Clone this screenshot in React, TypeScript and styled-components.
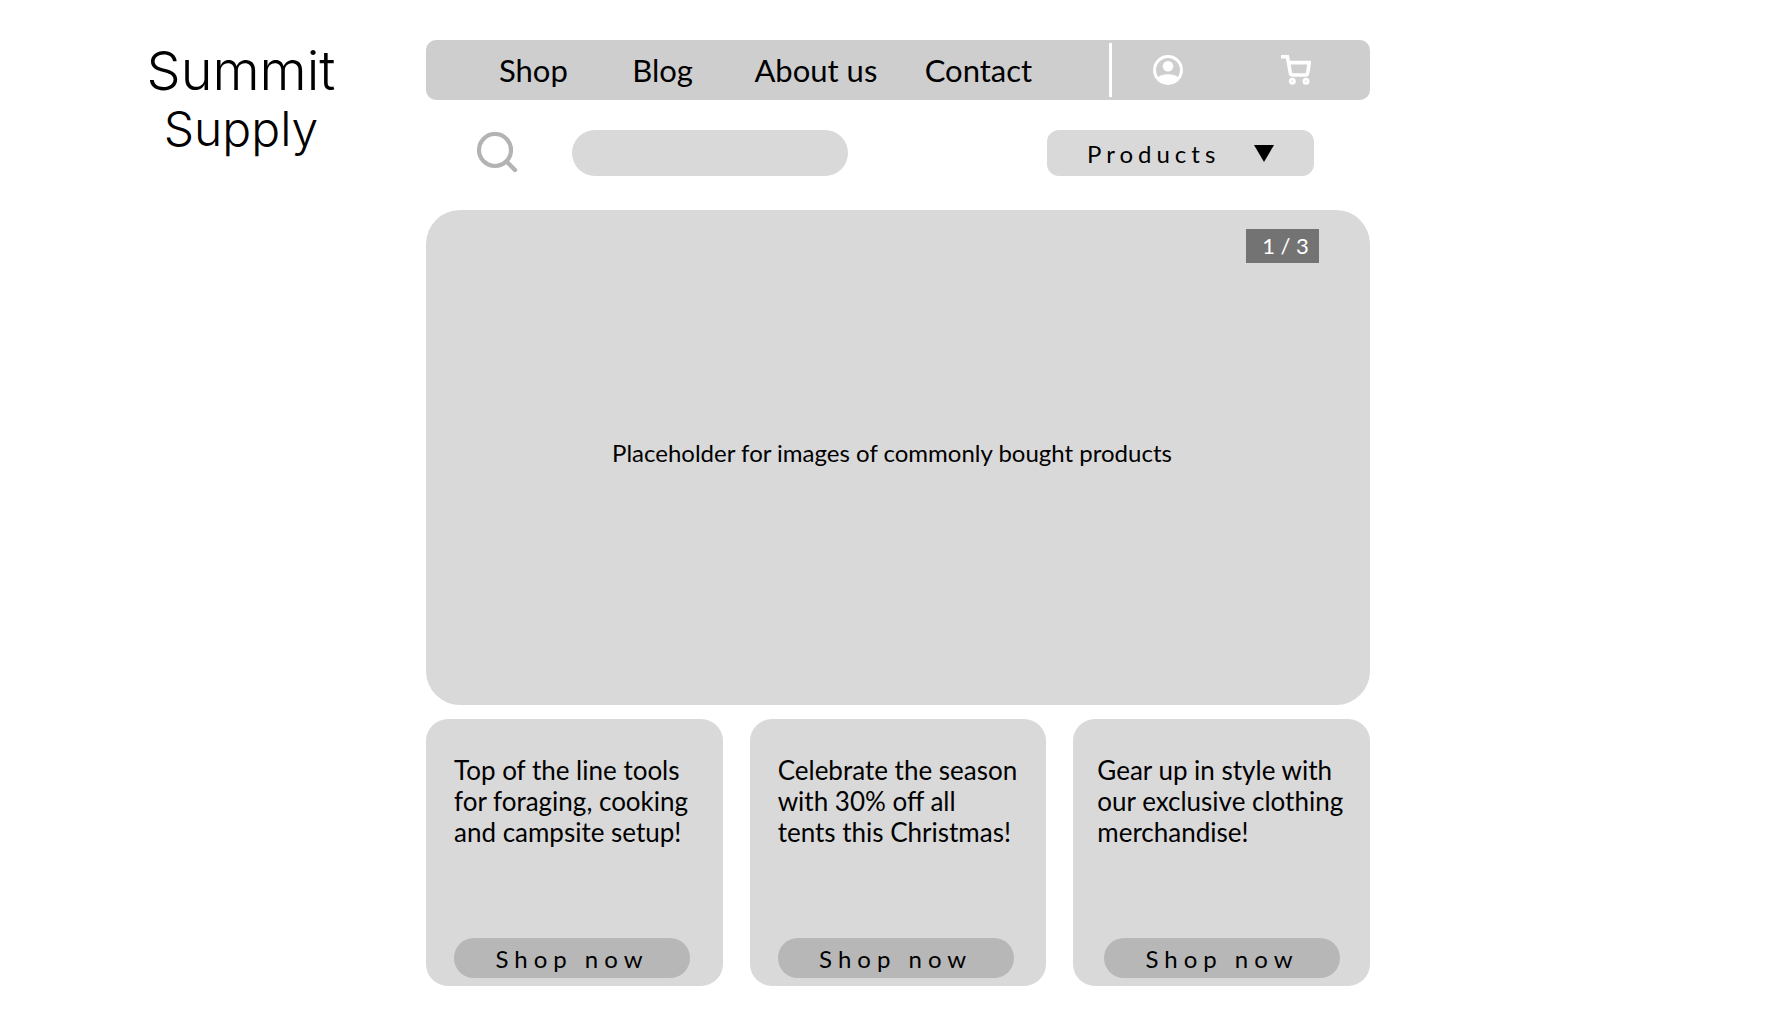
import React from 'react';
import styled, { createGlobalStyle } from 'styled-components';

const GlobalStyle = createGlobalStyle`
  *, *::before, *::after { box-sizing: border-box; }
  body {
    margin: 0;
    background: #ffffff;
    color: #000000;
    font-family: Lato, "Liberation Sans", sans-serif;
  }
`;

const Page = styled.div`
  display: grid;
  grid-template-columns: minmax(0, 426fr) minmax(0, 944fr) minmax(0, 422fr);
  align-items: start;
  padding: 40px 0 38px;
`;

const Brand = styled.a`
  display: flex;
  flex-direction: column;
  align-items: center;
  padding: 2px 0 0 56px;
  color: inherit;
  text-decoration: none;
  font-family: Inter, "Liberation Sans", sans-serif;
  font-weight: 300;
`;

const BrandLine = styled.span<{ $size: number }>`
  font-size: ${({ $size }) => $size}px;
  line-height: 58px;
`;

const Main = styled.main`
  display: flex;
  flex-direction: column;
`;

const NavBar = styled.nav`
  display: grid;
  grid-template-columns: 683fr 261fr;
  align-items: center;
  height: 60px;
  border-radius: 10px;
  background: #cecece;
`;

const NavLinks = styled.ul`
  display: grid;
  grid-template-columns: 133fr 122fr 170fr 184fr;
  margin: 0;
  padding: 0 0 0 73px;
  list-style: none;
`;

const NavLink = styled.a`
  color: inherit;
  font-size: 31px;
  line-height: 60px;
  text-decoration: none;
  white-space: nowrap;
`;

const NavActions = styled.div`
  display: flex;
  align-items: center;
  justify-content: space-between;
  height: 54px;
  padding: 0 59px 0 41px;
  border-left: 3px solid #ffffff;
`;

const IconButton = styled.button`
  display: flex;
  padding: 0;
  border: 0;
  background: none;
  color: #ffffff;
  cursor: pointer;
`;

const Tools = styled.div`
  display: flex;
  align-items: center;
  padding: 30px 56px 34px 50px;
`;

const SearchLabel = styled.label`
  display: flex;
  align-items: center;
  gap: 54px;
  color: #b3b3b3;
`;

const SearchInput = styled.input`
  width: 276px;
  height: 46px;
  padding: 0 22px;
  border: 0;
  border-radius: 23px;
  background: #d9d9d9;
  font: 24px Lato, "Liberation Sans", sans-serif;
`;

const SelectWrap = styled.div`
  display: grid;
  align-items: center;
  margin-left: auto;

  > * { grid-area: 1 / 1; }
  > svg { justify-self: end; margin-right: 40px; pointer-events: none; }
`;

const Select = styled.select`
  appearance: none;
  width: 267px;
  height: 46px;
  padding: 0 64px 0 40px;
  border: 0;
  border-radius: 12px;
  background: #d9d9d9;
  color: #000000;
  font: 24px Lato, "Liberation Sans", sans-serif;
  letter-spacing: 5px;
`;

const Hero = styled.section`
  display: grid;
  grid-template-rows: 34px 1fr 44px;
  min-height: 495px;
  padding: 19px 51px;
  border-radius: 34px;
  background: #d9d9d9;
`;

const Counter = styled.span`
  justify-self: end;
  width: 73px;
  padding-left: 6px;
  background: #737373;
  color: #ffffff;
  font-size: 22px;
  line-height: 34px;
  text-align: center;
`;

const HeroText = styled.p`
  align-self: center;
  margin: 0;
  padding-right: 12px;
  font-size: 24px;
  line-height: 30px;
  text-align: center;
`;

const Cards = styled.section`
  display: grid;
  grid-template-columns: repeat(3, minmax(0, 1fr));
  gap: 27px;
  padding-top: 14px;
`;

const Card = styled.article<{ $shifted?: boolean }>`
  display: flex;
  flex-direction: column;
  justify-content: space-between;
  min-height: 267px;
  padding: ${({ $shifted }) => ($shifted ? '36px 30px 8px 24px' : '36px 24px 8px 28px')};
  border-radius: 22px;
  background: #d9d9d9;
`;

const CardText = styled.p`
  margin: 0;
  font-size: 26px;
  line-height: 31px;
  white-space: pre;
`;

const ShopButton = styled.button<{ $shifted?: boolean }>`
  align-self: ${({ $shifted }) => ($shifted ? 'flex-end' : 'flex-start')};
  width: 236px;
  height: 40px;
  padding: 0;
  border: 0;
  border-radius: 20px;
  background: #b7b7b7;
  color: #000000;
  font: 24px Lato, "Liberation Sans", sans-serif;
  letter-spacing: 6px;
  cursor: pointer;
`;

const links = ['Shop', 'Blog', 'About us', 'Contact'];

const cards: { text: string; shifted?: boolean }[] = [
  { text: 'Top of the line tools\nfor foraging, cooking\nand campsite setup!' },
  { text: 'Celebrate the season\nwith 30% off all\ntents this Christmas!' },
  { text: 'Gear up in style with\nour exclusive clothing\nmerchandise!', shifted: true },
];

const UserIcon = () => (
  <svg width="30" height="30" viewBox="0 0 30 30" aria-hidden="true">
    <circle cx="15" cy="15" r="13.5" fill="none" stroke="currentColor" strokeWidth="3" />
    <circle cx="15" cy="11.3" r="5.3" fill="currentColor" />
    <path d="M4.5 22.5C7 20.5 11 19.3 15 19.3s8 1.2 10.5 3.2A13.5 13.5 0 0 1 4.5 22.5Z" fill="currentColor" />
  </svg>
);

const CartIcon = () => (
  <svg width="30" height="30" viewBox="0 0 30 30" fill="none" stroke="currentColor" aria-hidden="true">
    <path d="M0 1.7H6.4L9.4 18.2Q9.8 20 11.5 20H24.5Q26.3 20 26.6 18.2L28.3 7.6H8" strokeWidth="3.6" />
    <circle cx="11.3" cy="26.3" r="2.1" strokeWidth="2.8" />
    <circle cx="25" cy="26.3" r="2.1" strokeWidth="2.8" />
  </svg>
);

const SearchIcon = () => (
  <svg width="42" height="42" viewBox="0 0 42 42" fill="none" stroke="currentColor" aria-hidden="true">
    <circle cx="19" cy="18" r="16" strokeWidth="4.2" />
    <path d="M30.5 29.5L39 38" strokeWidth="4.4" strokeLinecap="round" />
  </svg>
);

const Triangle = () => (
  <svg width="20" height="17" viewBox="0 0 20 17" aria-hidden="true">
    <path d="M0 0H20L10 17Z" fill="#000000" />
  </svg>
);

export default function App() {
  return (
    <>
      <GlobalStyle />
      <Page>
        <Brand href="#home">
          <BrandLine $size={54}>Summit</BrandLine>
          <BrandLine $size={48}>Supply</BrandLine>
        </Brand>
        <Main>
          <NavBar aria-label="Main">
            <NavLinks>
              {links.map((link) => (
                <li key={link}>
                  <NavLink href="#">{link}</NavLink>
                </li>
              ))}
            </NavLinks>
            <NavActions>
              <IconButton type="button" aria-label="Account"><UserIcon /></IconButton>
              <IconButton type="button" aria-label="Cart"><CartIcon /></IconButton>
            </NavActions>
          </NavBar>
          <Tools>
            <SearchLabel>
              <SearchIcon />
              <SearchInput type="search" aria-label="Search" />
            </SearchLabel>
            <SelectWrap>
              <Select aria-label="Products" defaultValue="products">
                <option value="products">Products</option>
              </Select>
              <Triangle />
            </SelectWrap>
          </Tools>
          <Hero>
            <Counter>1 / 3</Counter>
            <HeroText>Placeholder for images of commonly bought products</HeroText>
          </Hero>
          <Cards>
            {cards.map(({ text, shifted }) => (
              <Card key={text} $shifted={shifted}>
                <CardText>{text}</CardText>
                <ShopButton type="button" $shifted={shifted}>Shop now</ShopButton>
              </Card>
            ))}
          </Cards>
        </Main>
      </Page>
    </>
  );
}
